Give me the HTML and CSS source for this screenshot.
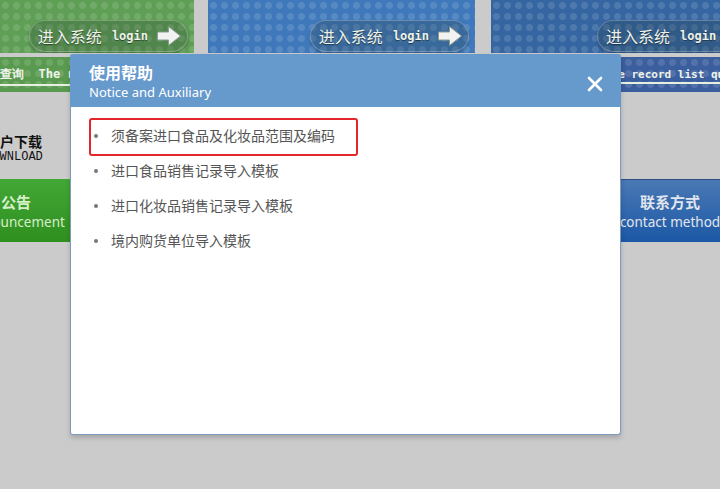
FILE: index.html
```html
<!DOCTYPE html>
<html>
  <head>
    <meta charset="utf-8">
    <meta name="viewport" content="width=device-width,initial-scale=1.0">
    <title>使用帮助</title>
    <link rel="stylesheet" href="styles.css">
  </head>
  <body>
    <div class="page">
      <div class="banner">
        <div class="panel panel-green">
          <div class="login">进入系统<span class="en">login</span>
            <svg class="arrow" width="26" height="22" viewBox="0 0 26 22"><path d="M1.5 7h11V1.5l12 9.5-12 9.5V15h-11z" fill="#f2f2f2" stroke="#8a9a90" stroke-width="1"/></svg>
          </div>
        </div>
        <div class="panel panel-blue">
          <div class="login">进入系统<span class="en">login</span>
            <svg class="arrow" width="26" height="22" viewBox="0 0 26 22"><path d="M1.5 7h11V1.5l12 9.5-12 9.5V15h-11z" fill="#f2f2f2" stroke="#8a9a90" stroke-width="1"/></svg>
          </div>
        </div>
        <div class="panel panel-dark">
          <div class="login">进入系统<span class="en">login</span>
            <svg class="arrow" width="26" height="22" viewBox="0 0 26 22"><path d="M1.5 7h11V1.5l12 9.5-12 9.5V15h-11z" fill="#f2f2f2" stroke="#8a9a90" stroke-width="1"/></svg>
          </div>
        </div>
      </div>

      <div class="strips">
        <div class="strip strip-green"><span>查询&nbsp; The record</span></div>
        <div class="strip strip-blue"><span>The record list query</span></div>
      </div>

      <div class="download">
        <strong>客户下载</strong>
        <span>DOWNLOAD</span>
      </div>

      <div class="buttons">
        <div class="btn btn-green"><strong>公告</strong><span>Announcement</span></div>
        <div class="btn btn-blue"><strong>联系方式</strong><span>contact method</span></div>
      </div>
    </div>

    <div class="modal">
      <div class="modal-head">
        <div>
          <h2>使用帮助</h2>
          <p>Notice and Auxiliary</p>
        </div>
        <svg class="close" width="16" height="16" viewBox="0 0 16 16"><path d="M2 2l12 12M14 2L2 14" stroke="#fff" stroke-width="2.6" stroke-linecap="round"/></svg>
      </div>
      <ul class="help-list">
        <li class="marked">须备案进口食品及化妆品范围及编码</li>
        <li>进口食品销售记录导入模板</li>
        <li>进口化妆品销售记录导入模板</li>
        <li>境内购货单位导入模板</li>
      </ul>
    </div>
  </body>
</html>
```

FILE: styles.css
```css
body {
  margin: 0;
  background: #cbcbcb;
  font-family: "Noto Sans", "Noto Sans CJK SC", sans-serif;
  overflow: hidden;
  height: 489px;
}

.page {
  width: 720px;
}

.banner {
  display: flex;
  height: 57px;
}

.panel {
  flex-shrink: 0;
  height: 53px;
  display: flex;
  justify-content: flex-end;
  align-items: flex-start;
  overflow: hidden;
  background-image: radial-gradient(circle, rgba(255,255,255,0.12) 3px, transparent 4px);
  background-size: 11px 11px;
}

.panel-green {
  width: 194px;
  background-color: #5e9e55;
}

.panel-blue {
  width: 267px;
  margin-left: 14px;
  background-color: #4079bb;
}

.panel-dark {
  flex: 1;
  min-width: 0;
  margin-left: 16px;
  background-color: #3566a2;
  justify-content: flex-start;
  padding-left: 106px;
}

.login {
  flex-shrink: 0;
  margin-top: 20px;
  margin-right: 6px;
  height: 30px;
  padding: 0 5px 0 8px;
  display: flex;
  align-items: center;
  border-radius: 16px;
  border: 1px solid rgba(255,255,255,0.25);
  background: rgba(30,50,40,0.22);
  box-shadow: 0 2px 3px rgba(0,0,0,0.25);
  color: #eef2ea;
  font-size: 16px;
  white-space: nowrap;
  text-shadow: 0 1px 1px rgba(0,0,0,0.5);
}

.login .en {
  font-family: "DejaVu Sans Mono", monospace;
  font-size: 12px;
  font-weight: bold;
  margin: 0 8px 0 10px;
}

.panel-dark .login {
  margin-right: 0;
}

.strips {
  display: flex;
  justify-content: space-between;
  height: 35px;
}

.strip {
  height: 35px;
  display: flex;
  align-items: center;
  overflow: hidden;
  white-space: nowrap;
  font-family: "DejaVu Sans Mono", monospace;
  font-weight: bold;
  font-size: 12px;
  color: #eef4ea;
  background-image: radial-gradient(circle, rgba(255,255,255,0.12) 3px, transparent 4px);
  background-size: 11px 11px;
}

.strip span {
  border-bottom: 2px solid #e6efe0;
  padding-bottom: 1px;
  margin-top: 2px;
}

.strip-green {
  width: 72px;
  background-color: #5a9a50;
}

.strip-blue {
  width: 229px;
  background-color: #3b5e9e;
  padding-left: 114px;
  box-sizing: border-box;
  font-size: 11px;
}

.download {
  margin-top: 42px;
  margin-left: -15px;
  width: 58px;
  display: flex;
  flex-direction: column;
  align-items: center;
}

.download strong {
  font-size: 14px;
  line-height: 16px;
  color: #111;
}

.download span {
  font-family: "Liberation Mono", monospace;
  font-size: 12px;
  line-height: 14px;
  color: #111;
}

.buttons {
  margin-top: 15px;
  display: flex;
  justify-content: space-between;
}

.btn {
  height: 63px;
  box-sizing: border-box;
  padding-top: 2px;
  display: flex;
  flex-direction: column;
  align-items: center;
  justify-content: center;
  line-height: 20px;
  font-size: 13.5px;
}

.btn strong {
  font-size: 15px;
}

.btn-green {
  width: 124px;
  margin-left: -46px;
  background: linear-gradient(#42a736, #2f8f1f);
  color: #d6efc8;
}

.btn-blue {
  width: 120px;
  margin-right: -10px;
  border-top: 1px solid #2d4f80;
  background: linear-gradient(#4a78b4, #1b58a6);
  color: #e2e6ee;
}

.modal {
  position: absolute;
  left: 70px;
  top: 54px;
  width: 549px;
  height: 380px;
  background: #fff;
  border: 1px solid #7d9dc0;
  border-top: none;
  border-radius: 3px;
  box-shadow: 0 3px 5px rgba(0,0,0,0.18);
}

.modal-head {
  height: 53px;
  margin: 0 -1px;
  padding: 2px 18px 0 19px;
  box-sizing: border-box;
  background: #6699cc;
  color: #fff;
  display: flex;
  justify-content: space-between;
  align-items: center;
  border-radius: 3px 3px 0 0;
}

.modal-head h2 {
  margin: 0;
  font-size: 16px;
  font-weight: bold;
  line-height: 20px;
}

.modal-head p {
  margin: 0;
  font-size: 13px;
  line-height: 18px;
}

.close {
  margin-top: 4px;
}

.help-list {
  list-style: none;
  margin: 0;
  padding: 11px 0 0 18px;
}

.help-list li {
  position: relative;
  height: 35px;
  line-height: 35px;
  padding-left: 22px;
  font-size: 14px;
  color: #555;
}

.help-list li::before {
  content: "";
  position: absolute;
  left: 5px;
  top: 16px;
  width: 4px;
  height: 4px;
  border-radius: 50%;
  background: #777;
}

.help-list li.marked::after {
  content: "";
  position: absolute;
  left: 0;
  top: 0;
  width: 269px;
  height: 38px;
  box-sizing: border-box;
  border: 2px solid #e3262b;
  border-radius: 3px;
}
```
